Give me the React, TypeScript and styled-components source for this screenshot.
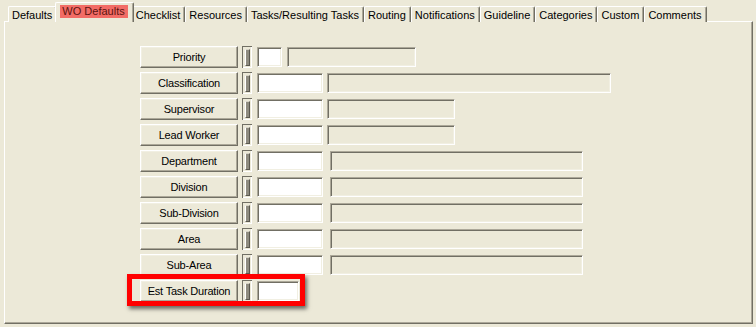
import styled, { createGlobalStyle, css } from 'styled-components';

// classic XP palette
const FACE = '#ece9d8';
const DARK = '#716f64';
const MID = '#aca899';
const LIGHT = '#f1efe2';

const GlobalStyle = createGlobalStyle`
  html, body {
    margin: 0;
    padding: 0;
    background: ${FACE};
  }
  body {
    font-family: 'Liberation Sans', Arial, sans-serif;
    font-size: 11px;
    color: #000;
  }
`;

type Field = {
  label: string;
  codeWidth: number;
  descGap?: number;
  descWidth?: number;
  highlight?: boolean;
};

const tabs = [
  'Defaults',
  'WO Defaults',
  'Checklist',
  'Resources',
  'Tasks/Resulting Tasks',
  'Routing',
  'Notifications',
  'Guideline',
  'Categories',
  'Custom',
  'Comments',
];

const fields: Field[] = [
  { label: 'Priority', codeWidth: 25, descGap: 5, descWidth: 129 },
  { label: 'Classification', codeWidth: 66, descGap: 4, descWidth: 284 },
  { label: 'Supervisor', codeWidth: 66, descGap: 4, descWidth: 128 },
  { label: 'Lead Worker', codeWidth: 66, descGap: 4, descWidth: 128 },
  { label: 'Department', codeWidth: 66, descGap: 7, descWidth: 253 },
  { label: 'Division', codeWidth: 66, descGap: 7, descWidth: 253 },
  { label: 'Sub-Division', codeWidth: 66, descGap: 7, descWidth: 253 },
  { label: 'Area', codeWidth: 66, descGap: 7, descWidth: 253 },
  { label: 'Sub-Area', codeWidth: 66, descGap: 7, descWidth: 253 },
  { label: 'Est Task Duration', codeWidth: 42, highlight: true },
];

function App() {
  const active = 'WO Defaults';

  return (
    <Window>
      <GlobalStyle />
      <TabBar>
        {tabs.map((t) => (
          <Tab key={t} $active={t === active}>
            {t === active ? <Marked>{t}</Marked> : t}
          </Tab>
        ))}
      </TabBar>
      <Panel>
        <Form>
          {fields.map((f) => (
            <Row key={f.label} $highlight={f.highlight}>
              <LabelCell>
                <LookupButton type='button'>{f.label}</LookupButton>
              </LabelCell>
              <Grip />
              <CodeInput $width={f.codeWidth} />
              {f.descWidth && (
                <DescInput $gap={f.descGap ?? 4} $width={f.descWidth} />
              )}
            </Row>
          ))}
        </Form>
      </Panel>
    </Window>
  );
}

export default App;

const Window = styled.div`
  width: 756px;
  height: 327px;
  box-sizing: border-box;
  padding: 4px 3px 0 4px;
  background: ${FACE};
  overflow: hidden;
`;

const TabBar = styled.div`
  position: relative;
  z-index: 1;
  display: flex;
  align-items: flex-end;
  height: 18px;
  padding-left: 4px;
  margin-bottom: -1px;
`;

const Tab = styled.div<{ $active?: boolean }>`
  display: flex;
  align-items: center;
  height: 16px;
  box-sizing: border-box;
  padding: 1px 4px 0 3px;
  white-space: nowrap;
  background: ${FACE};
  border-top: 1px solid #fff;
  border-left: 1px solid #fff;
  border-right: 1px solid ${DARK};
  border-top-left-radius: 2px;
  border-top-right-radius: 2px;
  box-shadow: inset -1px 0 ${MID};
  ${({ $active }) =>
    $active &&
    css`
      position: relative;
      z-index: 1;
      height: 20px;
      margin: 0 -2px;
      padding: 0 5px 2px 4px;
    `}
`;

const Marked = styled.span`
  display: inline-block;
  padding: 0 3px 0 2px;
  line-height: 13px;
  background: #f26c66;
  color: #5c1410;
`;

const Panel = styled.div`
  width: 749px;
  height: 303px;
  box-sizing: border-box;
  border-top: 1px solid #fff;
  border-left: 1px solid #fff;
  border-right: 1px solid ${DARK};
  border-bottom: 1px solid ${DARK};
  box-shadow: inset -1px -1px ${MID};
`;

const Form = styled.div`
  display: flex;
  flex-direction: column;
  row-gap: 4px;
  padding: 24px 0 0 123px;
`;

const Row = styled.div<{ $highlight?: boolean }>`
  position: relative;
  display: flex;
  align-items: center;
  height: 22px;
  ${({ $highlight }) =>
    $highlight &&
    css`
      &::after {
        content: '';
        position: absolute;
        left: -1px;
        top: -6px;
        width: 178px;
        height: 32px;
        box-sizing: border-box;
        border: 5px solid #ff0000;
        box-shadow: 2px 3px 4px rgba(0, 0, 0, 0.55);
        pointer-events: none;
      }
    `}
`;

const LabelCell = styled.div`
  display: flex;
  justify-content: flex-end;
  width: 110px;
`;

const LookupButton = styled.button`
  min-width: 98px;
  height: 22px;
  box-sizing: border-box;
  padding: 0 5px;
  margin: 0;
  background: ${FACE};
  border: 1px solid;
  border-color: #fff ${DARK} ${DARK} #fff;
  box-shadow: inset -1px -1px ${MID}, inset 1px 1px ${LIGHT};
  font-family: 'Liberation Sans', Arial, sans-serif;
  font-size: 11px;
  font-weight: normal;
  letter-spacing: -0.2px;
  color: #000;
  white-space: nowrap;
`;

const Grip = styled.span`
  display: flex;
  align-items: center;
  justify-content: center;
  width: 10px;
  height: 22px;
  margin-left: 4px;
  box-sizing: border-box;
  box-shadow: inset 1px 1px ${DARK}, inset -1px -1px #fff;
  &::before {
    content: '';
    width: 5px;
    height: 17px;
    box-sizing: border-box;
    background: #8f8c80;
    border-left: 1px solid #fff;
    border-top: 1px solid #d8d5c8;
    border-right: 1px solid #5a584f;
    border-bottom: 1px solid #5a584f;
  }
`;

const sunken = css`
  height: 20px;
  box-sizing: border-box;
  padding: 0 2px;
  border: 1px solid;
  border-color: ${MID} #fff #fff ${MID};
  box-shadow: inset 1px 1px ${DARK}, inset -1px -1px ${LIGHT};
  font-family: 'Liberation Sans', Arial, sans-serif;
  font-size: 11px;
  outline: none;
`;

const CodeInput = styled.input<{ $width: number }>`
  ${sunken};
  width: ${({ $width }) => $width}px;
  margin-left: 5px;
  background: #fff;
`;

const DescInput = styled.div<{ $gap: number; $width: number }>`
  ${sunken};
  width: ${({ $width }) => $width}px;
  margin-left: ${({ $gap }) => $gap}px;
  background: ${FACE};
`;
